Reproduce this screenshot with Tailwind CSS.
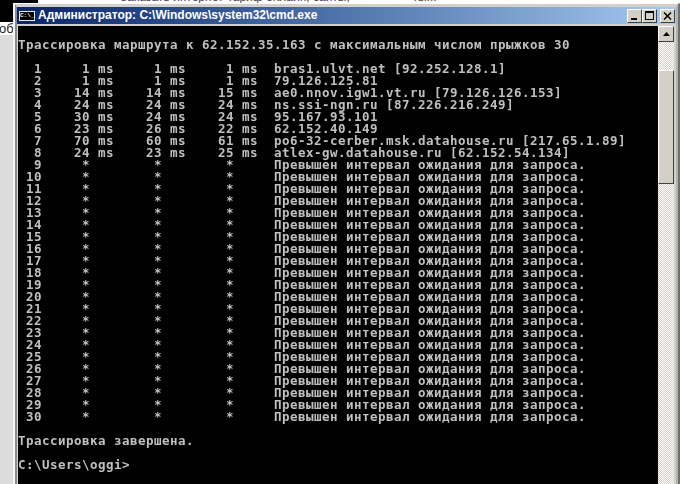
<!DOCTYPE html>
<html lang="ru">

<head>
    <meta charset="UTF-8">
    <title>cmd.exe</title>
    <script src="https://cdn.jsdelivr.net/npm/@tailwindcss/browser@4"></script>
</head>

<body class="w-[680px] h-[484px] overflow-hidden bg-[#dcdcdc] flex flex-col">
    <!-- page behind the window, only its lower edge shows -->
    <div class="h-[3px] flex shrink-0 overflow-hidden bg-white">
        <div class="w-[38px] bg-black"></div>
        <div class="w-[82px]"></div>
        <div class="-mt-[9px] whitespace-pre text-[12px] leading-[12px] text-[#444] font-['Liberation_Sans',sans-serif]">Заказать интернет-тариф онлайн, сайты, -------------- ты...</div>
    </div>

    <div class="flex flex-1 min-h-0">
        <div class="w-[13px] shrink-0 flex flex-col overflow-hidden">
            <div class="h-[19px] bg-black"></div>
            <div class="h-[13px] bg-white text-[13px] leading-[13px] whitespace-pre text-[#222] -ml-[10px] font-['Liberation_Sans',sans-serif]">Доб</div>
            <div class="flex-1 bg-[#dcdcdc]"></div>
        </div>

        <!-- window frame -->
        <div class="flex-1 border-t-[1px] border-l-2 border-t-white border-l-[#f4f4f4] border-r-2 border-r-[#707070] bg-[#d4d0c8] flex flex-col min-w-0">
            <div class="flex-1 flex flex-col min-h-0 border-l-2 border-l-[#8c8c8c] border-t-[3px] border-t-[#d4d0c8] border-r-2 border-r-[#b5b2ac] pl-px">
                <!-- title bar -->
                <div class="h-[17px] mt-0 ml-[-1px] flex items-center shrink-0 bg-gradient-to-r from-[#0a246a] to-[#a6caf0]">
                    <div class="w-[16px] h-[10px] ml-[2px] bg-black border border-[#e8e8e8] text-white text-[6px] leading-[8px] font-bold text-center overflow-hidden font-['Liberation_Mono',monospace]">C:\_</div>
                    <div class="ml-[3px] text-white text-[12px] leading-[17px] font-bold whitespace-pre font-['Liberation_Sans',sans-serif]">Администратор: C:\Windows\system32\cmd.exe</div>
                    <div class="ml-auto flex mr-[1px]">
                        <div class="w-[15px] h-[14px] bg-[#d4d0c8] border border-t-white border-l-white border-r-[#404040] border-b-[#404040] flex items-end justify-center pb-[2px]">
                            <div class="w-[6px] h-[2px] bg-black -ml-[2px]"></div>
                        </div>
                        <div class="w-[15px] h-[14px] bg-[#d4d0c8] border border-t-white border-l-white border-r-[#404040] border-b-[#404040] flex items-center justify-center">
                            <div class="w-[9px] h-[9px] border border-black border-t-2"></div>
                        </div>
                        <div class="w-[15px] h-[14px] ml-[3px] bg-[#d4d0c8] border border-t-white border-l-white border-r-[#404040] border-b-[#404040] flex items-center justify-center">
                            <svg width="9" height="8" viewBox="0 0 9 8"><path d="M1 0.5L8 7.5M8 0.5L1 7.5" stroke="black" stroke-width="1.5" fill="none" /></svg>
                        </div>
                    </div>
                </div>
                <div class="h-[2px] ml-[-1px] shrink-0 bg-[#d4d0c8]"></div>

                <div class="flex flex-1 min-h-0">
                    <!-- console -->
                    <div class="w-[640px] shrink-0 bg-black overflow-hidden pt-[13px]">
                        <div class="will-change-transform text-[#c0c0c0] text-[12.5px] tracking-[0.475px] leading-[12px] font-bold whitespace-pre font-['DejaVu_Sans_Mono',monospace]">Трассировка маршрута к 62.152.35.163 с максимальным числом прыжков 30

  1     1 ms     1 ms     1 ms  bras1.ulvt.net [92.252.128.1]
  2     1 ms     1 ms     1 ms  79.126.125.81
  3    14 ms    14 ms    15 ms  ae0.nnov.igw1.vt.ru [79.126.126.153]
  4    24 ms    24 ms    24 ms  ns.ssi-ngn.ru [87.226.216.249]
  5    30 ms    24 ms    24 ms  95.167.93.101
  6    23 ms    26 ms    22 ms  62.152.40.149
  7    70 ms    60 ms    61 ms  po6-32-cerber.msk.datahouse.ru [217.65.1.89]
  8    24 ms    23 ms    25 ms  atlex-gw.datahouse.ru [62.152.54.134]
  9     *        *        *     Превышен интервал ожидания для запроса.
 10     *        *        *     Превышен интервал ожидания для запроса.
 11     *        *        *     Превышен интервал ожидания для запроса.
 12     *        *        *     Превышен интервал ожидания для запроса.
 13     *        *        *     Превышен интервал ожидания для запроса.
 14     *        *        *     Превышен интервал ожидания для запроса.
 15     *        *        *     Превышен интервал ожидания для запроса.
 16     *        *        *     Превышен интервал ожидания для запроса.
 17     *        *        *     Превышен интервал ожидания для запроса.
 18     *        *        *     Превышен интервал ожидания для запроса.
 19     *        *        *     Превышен интервал ожидания для запроса.
 20     *        *        *     Превышен интервал ожидания для запроса.
 21     *        *        *     Превышен интервал ожидания для запроса.
 22     *        *        *     Превышен интервал ожидания для запроса.
 23     *        *        *     Превышен интервал ожидания для запроса.
 24     *        *        *     Превышен интервал ожидания для запроса.
 25     *        *        *     Превышен интервал ожидания для запроса.
 26     *        *        *     Превышен интервал ожидания для запроса.
 27     *        *        *     Превышен интервал ожидания для запроса.
 28     *        *        *     Превышен интервал ожидания для запроса.
 29     *        *        *     Превышен интервал ожидания для запроса.
 30     *        *        *     Превышен интервал ожидания для запроса.

Трассировка завершена.

C:\Users\oggi&gt;</div>
                    </div>

                    <!-- scrollbar -->
                    <div class="w-[16px] shrink-0 flex flex-col bg-[repeating-conic-gradient(#d4d0c8_0_25%,#ffffff_0_50%)] bg-[length:2px_2px]">
                        <div class="h-[16px] bg-[#d4d0c8] border border-t-white border-l-white border-r-[#404040] border-b-[#404040] flex items-center justify-center">
                            <svg width="7" height="4" viewBox="0 0 7 4"><path d="M3.5 0L7 4H0Z" fill="black" /></svg>
                        </div>
                        <div class="h-[28px]"></div>
                        <div class="h-[114px] bg-[#d4d0c8] border border-t-white border-l-white border-r-[#404040] border-b-[#404040]"></div>
                    </div>
                </div>
            </div>
        </div>
    </div>
</body>

</html>
